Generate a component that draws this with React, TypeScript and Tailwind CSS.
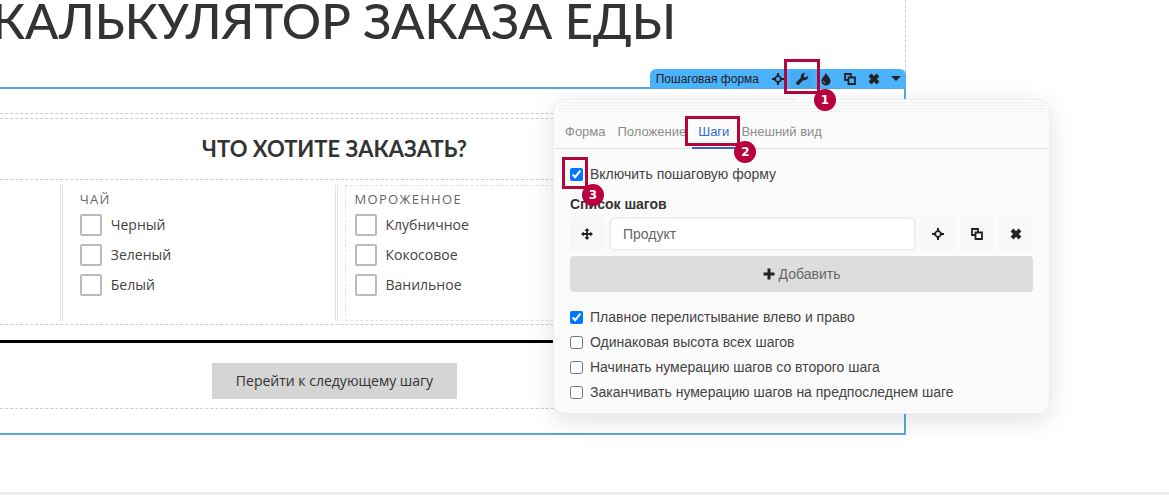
import { useState, type ReactNode } from 'react'
import clsx from 'clsx'

const GROUPS = [
  { title: 'Пицца', hidden: true, items: [] },
  { title: 'Чай', items: ['Черный', 'Зеленый', 'Белый'] },
  { title: 'Мороженное', framed: true, items: ['Клубничное', 'Кокосовое', 'Ванильное'] },
  { title: 'Десерт', hidden: true, items: [] },
]

const TABS = ['Форма', 'Положение', 'Шаги', 'Внешний вид']

const OPTIONS = [
  { label: 'Плавное перелистывание влево и право', checked: true },
  { label: 'Одинаковая высота всех шагов', checked: false },
  { label: 'Начинать нумерацию шагов со второго шага', checked: false },
  { label: 'Заканчивать нумерацию шагов на предпоследнем шаге', checked: false },
]

function TargetIcon() {
  return (
    <svg viewBox="0 0 12 12" className="h-3 w-3" fill="none" stroke="currentColor">
      <path d="M6 2 10 6 6 10 2 6Z" strokeWidth="1.5" />
      <path d="M6 0v4.3M6 7.7V12M0 6h4.3M7.7 6H12" strokeWidth="2" />
    </svg>
  )
}

function MoveIcon() {
  return (
    <svg viewBox="0 0 12 12" className="h-3 w-3" fill="currentColor">
      <path d="M6 0 8.6 2.8H6.9v2.3h2.3V3.4L12 6 9.2 8.6V6.9H6.9v2.3h1.7L6 12 3.4 9.2h1.7V6.9H2.8v1.7L0 6l2.8-2.6v1.7h2.3V2.8H3.4Z" />
    </svg>
  )
}

function WrenchIcon() {
  return (
    <svg viewBox="0 0 12 12" className="h-3 w-3" fill="currentColor">
      <path d="M11.7 2.7 9.8 4.4 8 4 7.6 2.2 9.3.3A3.5 3.5 0 0 0 4.9 4.7L.6 9a1.4 1.4 0 0 0 0 2.1l.3.3a1.4 1.4 0 0 0 2.1 0l4.3-4.3a3.5 3.5 0 0 0 4.4-4.4Z" />
    </svg>
  )
}

function DropIcon() {
  return (
    <svg viewBox="0 0 12 14" className="h-[14px] w-3" fill="currentColor">
      <path d="M6 .5C6.8 3.6 10.5 5.9 10.5 9a4.5 4.5 0 0 1-9 0C1.5 5.9 5.2 3.6 6 .5Z" />
      <path d="M3.4 8.8a2.6 2.6 0 0 0 2 2.5" fill="none" stroke="#4db2fc" strokeWidth=".9" />
    </svg>
  )
}

function CopyIcon() {
  return (
    <svg viewBox="0 0 12 12" className="h-3 w-3" fill="none" stroke="currentColor" strokeWidth="1.8">
      <path d="M4 7H1V1h6v3" />
      <path d="M4.5 4.5H11V11H4.5Z" />
    </svg>
  )
}

function CrossIcon() {
  return (
    <svg viewBox="0 0 12 12" className="h-3 w-3" fill="none" stroke="currentColor" strokeWidth="4">
      <path d="M2 2 10 10M10 2 2 10" />
    </svg>
  )
}

function PlusIcon() {
  return (
    <svg viewBox="0 0 12 12" className="h-3 w-3" fill="none" stroke="#222" strokeWidth="3">
      <path d="M6 .5v11M.5 6h11" />
    </svg>
  )
}

function Marker({ n, className }: { n: number; className: string }) {
  return (
    <span className={clsx('pointer-events-none absolute z-30 border-[3px] border-[#b3063f]', className)}>
      <span className="absolute -right-[19px] -bottom-[20px] flex h-[22px] w-[22px] items-center justify-center rounded-full bg-[#b8003f] font-['DejaVu_Sans',sans-serif] text-xs font-bold text-white">
        {n}
      </span>
    </span>
  )
}

function RowButton({ label, children }: { label: string; children: ReactNode }) {
  return (
    <button aria-label={label} className="flex h-[34px] w-[34px] shrink-0 items-center justify-center rounded-sm bg-[#f7f7f7] text-[#222]">
      {children}
    </button>
  )
}

function Toolbar() {
  return (
    <div className="absolute -top-5 -right-[2px] z-20 flex h-[19px] items-center rounded-t-md bg-[#4db2fc] pr-px pl-[6px] text-[#222]">
      <span className="mr-2 text-xs">Пошаговая форма</span>
      <div className="flex items-center gap-[2px]">
        <button aria-label="Переместить" className="flex w-[22px] justify-center"><TargetIcon /></button>
        <div className="relative">
          <button aria-label="Настройки" className="flex h-[18px] w-[22px] items-center justify-center bg-[#46abf5]"><WrenchIcon /></button>
          <Marker n={1} className="-inset-x-[7px] -top-[11px] -bottom-[6px]" />
        </div>
        <button aria-label="Цвет" className="flex w-[22px] justify-center"><DropIcon /></button>
        <button aria-label="Копировать" className="flex w-[22px] justify-center"><CopyIcon /></button>
        <button aria-label="Удалить" className="flex w-[22px] justify-center"><CrossIcon /></button>
        <button aria-label="Ещё" className="flex w-[18px] justify-center">
          <svg viewBox="0 0 10 5" className="h-[5px] w-[10px]" fill="currentColor"><path d="M0 0h10L5 5Z" /></svg>
        </button>
      </div>
    </div>
  )
}

function SettingsPanel() {
  const [tab, setTab] = useState('Шаги')

  return (
    <div className="absolute top-[10px] -right-[146px] z-10 w-[497px] rounded-xl border border-[#eee] bg-[#fbfbfb] pb-[11px] text-sm text-[#444] shadow-[0_6px_24px_rgba(0,0,0,0.12)]">
      <svg viewBox="0 0 20 8" className="absolute -top-[6px] left-[238px] h-2 w-5">
        <path d="M0 7 6 1h8l6 6" fill="#fbfbfb" stroke="#eee" />
      </svg>
      {/* Drag handle */}
      <div className="mx-[5px] flex flex-col gap-[2px] pt-[2px]">
        <div className="h-px bg-[#f0f0f0]" />
        <div className="h-px bg-[#f0f0f0]" />
        <div className="h-px bg-[#f0f0f0]" />
        <div className="h-px bg-[#f0f0f0]" />
      </div>

      {/* Tabs */}
      <div role="tablist" className="mx-px flex border-b border-[#ddd] pl-1">
        {TABS.map((t) => (
          <div key={t} className="relative">
            <button
              role="tab"
              aria-selected={t === tab}
              onClick={() => setTab(t)}
              className={clsx(
                '-mb-px h-[37px] border-b-2 px-[6px] pt-[6px] text-[13px]',
                t === tab ? 'border-[#3b62c4] text-[#2b6fd6]' : 'border-transparent text-[#8c8c8c]'
              )}
            >
              {t}
            </button>
            {t === 'Шаги' && <Marker n={2} className="top-1 -right-[5px] bottom-[2px] -left-[7px]" />}
          </div>
        ))}
      </div>

      <div className="px-4 pt-[15px]">
        <label className="flex h-5 items-center gap-[7px]">
          <span className="relative flex">
            <input type="checkbox" defaultChecked className="h-[13px] w-[13px]" />
            <Marker n={3} className="-top-[11px] -right-[5px] -bottom-2 -left-2" />
          </span>
          Включить пошаговую форму
        </label>

        <h3 className="mt-[10px] h-5 leading-5 font-bold text-[#333]">Список шагов</h3>
        <div className="mt-[3px] flex items-center gap-[5px]">
          <RowButton label="Перетащить"><MoveIcon /></RowButton>
          <input
            aria-label="Название шага"
            defaultValue="Продукт"
            className="h-[34px] min-w-0 flex-1 rounded-md border-2 border-[#eee] bg-white px-3 text-[#666]"
          />
          <RowButton label="Выбрать"><TargetIcon /></RowButton>
          <RowButton label="Копировать шаг"><CopyIcon /></RowButton>
          <RowButton label="Удалить шаг"><CrossIcon /></RowButton>
        </div>
        <button className="mt-[5px] flex h-9 w-full items-center justify-center gap-1 rounded-sm bg-[#ddd] text-[#666]">
          <PlusIcon />
          Добавить
        </button>

        <div className="mt-[15px] flex flex-col gap-[5px]">
          {OPTIONS.map((o) => (
            <label key={o.label} className="flex h-5 items-center gap-[7px]">
              <input type="checkbox" defaultChecked={o.checked} className="h-[13px] w-[13px]" />
              {o.label}
            </label>
          ))}
        </div>
      </div>
    </div>
  )
}

export default function App() {
  return (
    <div className="overflow-x-hidden bg-white font-['Liberation_Sans',Arial,sans-serif]">
      <div className="mr-[263px] -ml-[237px]">
        <h1 className="h-[87px] border-r border-dashed border-[#ccc] text-center font-[Lato,sans-serif] text-[49px] leading-10 font-medium whitespace-nowrap text-[#333]">
          КАЛЬКУЛЯТОР ЗАКАЗА ЕДЫ
        </h1>

        <section className="relative border-2 border-[#58a9dc] pt-6 pb-6">
          <Toolbar />
          <SettingsPanel />

          <div className="border-y border-dashed border-[#ccc] pt-1">
            <div className="border-y border-dashed border-[#ccc]">
              <h2 className="h-[60px] text-center font-[Lato,sans-serif] text-[22px] leading-[60px] font-bold text-[#333]">
                ЧТО ХОТИТЕ ЗАКАЗАТЬ?
              </h2>
            </div>

            <div className="mx-5 mt-[5px] mb-[3px] grid grid-cols-4">
              {GROUPS.map((g) => (
                <div key={g.title} className="h-[136px] border-l-3 border-double border-[#e4e4e4] pl-[7px]">
                  {!g.hidden && (
                    <fieldset className={clsx('h-full border border-dashed pl-[9px]', g.framed ? 'border-[#e2e2e2]' : 'border-transparent')}>
                      <legend className="float-left w-full pt-[3px] font-['Open_Sans',sans-serif] text-[13px] leading-5 tracking-widest text-[#666] uppercase">
                        {g.title}
                      </legend>
                      <div className="clear-both flex flex-col items-start gap-2 pt-[5px] font-['Open_Sans',sans-serif] text-sm text-[#444]">
                        {g.items.map((item) => (
                          <label key={item} className="flex h-[22px] items-center gap-[9px]">
                            <input type="checkbox" className="h-[22px] w-[22px] appearance-none rounded-xs border-2 border-[#bbb]" />
                            {item}
                          </label>
                        ))}
                      </div>
                    </fieldset>
                  )}
                </div>
              ))}
            </div>
          </div>

          <div className="border-b border-dashed border-[#ccc] pt-[15px] pb-[9px]">
            <hr className="h-[3px] border-0 bg-black" />
            <button className="mx-auto mt-5 block h-9 bg-[#d5d5d5] px-6 font-['Open_Sans',sans-serif] text-sm text-[#333]">
              Перейти к следующему шагу
            </button>
          </div>
        </section>
      </div>
      <div className="mt-[57px] h-[3px] bg-[#ebebeb]" />
    </div>
  )
}
